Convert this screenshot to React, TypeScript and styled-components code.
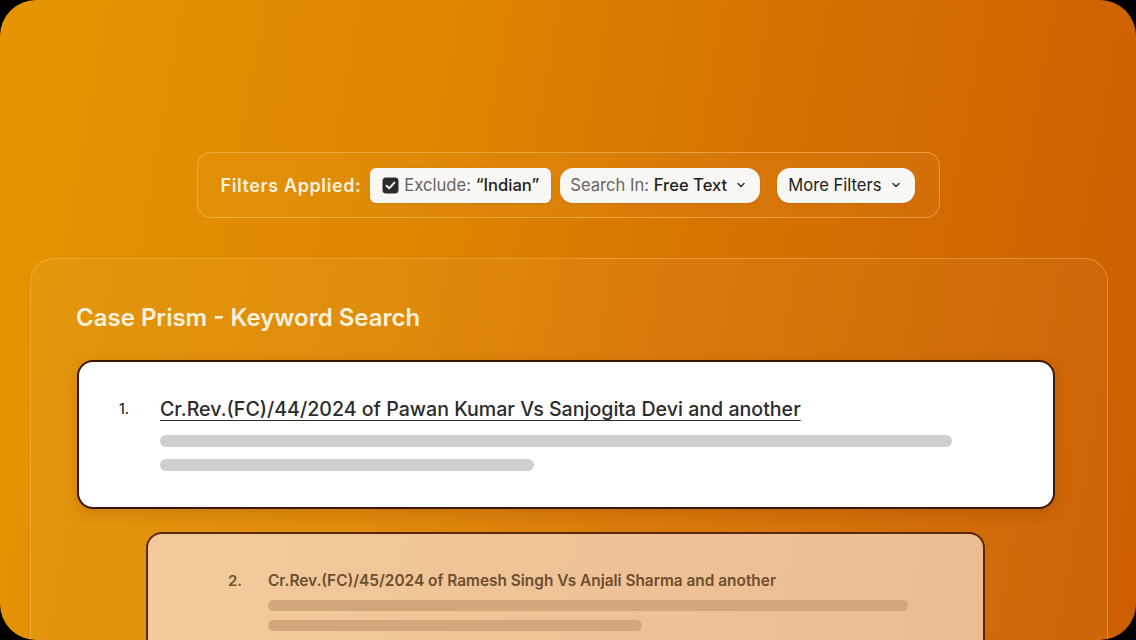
import React from "react";
import styled, { createGlobalStyle } from "styled-components";

const Global = createGlobalStyle`
  html, body { margin: 0; padding: 0; background: #000; }
  body { font-family: Inter, "Noto Sans", "Liberation Sans", sans-serif; }
  * { box-sizing: border-box; }
`;

const Frame = styled.div`
  width: 1136px;
  height: 640px;
  border-radius: 36px;
  overflow: hidden;
  background: linear-gradient(100deg, #e49500 0%, #de8700 35%, #d77400 60%, #cc5e00 100%);
  display: flex;
  flex-direction: column;
  align-items: center;
`;

const FilterBar = styled.div`
  flex: none;
  margin-top: 152px;
  width: 743px;
  height: 66px;
  border-radius: 14px;
  border: 1px solid rgba(255, 214, 140, 0.4);
  background: rgba(255, 255, 255, 0.03);
  display: flex;
  align-items: center;
  padding: 0 24px 0 23px;
`;

const FilterLabel = styled.span`
  font-size: 18px;
  font-weight: 600;
  letter-spacing: 0.6px;
  color: #fdf1dd;
  margin-right: 9px;
  white-space: nowrap;
`;

const Chip = styled.div<{ $radius: number; $gapAfter: number; $padL: number; $padR: number }>`
  height: 35px;
  display: flex;
  align-items: center;
  gap: 5px;
  padding: 0 ${(p) => p.$padR}px 0 ${(p) => p.$padL}px;
  margin-right: ${(p) => p.$gapAfter}px;
  border-radius: ${(p) => p.$radius}px;
  background: #f9f7f4;
  font-size: 16.6px;
  white-space: nowrap;
  box-shadow: 0 1px 2px rgba(120, 60, 0, 0.15);
`;

const Muted = styled.span`
  color: #666360;
  font-weight: 400;
`;

const Strong = styled.span<{ $weight?: number }>`
  color: #232220;
  font-weight: ${(p) => p.$weight ?? 500};
`;

const Chevron = styled.svg`
  margin-left: 4px;
  flex: none;
`;

const Panel = styled.div`
  margin-top: 40px;
  align-self: stretch;
  margin-left: 30px;
  margin-right: 28px;
  flex: 1 0 auto;
  border-radius: 24px 24px 0 0;
  border: 1px solid rgba(255, 210, 130, 0.35);
  border-bottom: none;
  background: linear-gradient(100deg, rgba(255, 255, 255, 0.05), rgba(255, 255, 255, 0.03));
  padding: 44px 52px 0 45px;
  display: flex;
  flex-direction: column;
`;

const Title = styled.h1`
  margin: 0;
  font-size: 24px;
  line-height: 30px;
  font-weight: 600;
  color: #fdf1dc;
`;

const Card = styled.div<{ $variant: "front" | "back" }>`
  flex: none;
  border: 2px solid ${(p) => (p.$variant === "front" ? "#3a1606" : "#5a2800")};
  border-radius: 16px;
  background: ${(p) =>
    p.$variant === "front" ? "#ffffff" : "linear-gradient(100deg, #f2cb9c, #ebbc92)"};
  box-shadow: ${(p) => (p.$variant === "front" ? "0 4px 14px rgba(90, 30, 0, 0.18)" : "none")};
  margin: ${(p) => (p.$variant === "front" ? "27px 0 0 1px" : "23px 70px 0")};
  padding: ${(p) => (p.$variant === "front" ? "34px 40px 36px 40px" : "36px 40px 40px 80px")};
  display: flex;
`;

const Num = styled.span<{ $variant: "front" | "back" }>`
  width: ${(p) => (p.$variant === "front" ? 41 : 40)}px;
  flex: none;
  font-size: ${(p) => (p.$variant === "front" ? 14 : 15)}px;
  font-weight: ${(p) => (p.$variant === "front" ? 500 : 600)};
  line-height: ${(p) => (p.$variant === "front" ? 26 : 22)}px;
  color: ${(p) => (p.$variant === "front" ? "#2a2a2a" : "#70502f")};
`;

const Body = styled.div`
  display: flex;
  flex-direction: column;
  flex: 1;
`;

const CaseTitle = styled.a<{ $variant: "front" | "back" }>`
  font-size: ${(p) => (p.$variant === "front" ? 19.6 : 15.4)}px;
  font-weight: ${(p) => (p.$variant === "front" ? 500 : 600)};
  line-height: ${(p) => (p.$variant === "front" ? 26 : 22)}px;
  color: ${(p) => (p.$variant === "front" ? "#2b2b2b" : "#6e4d2e")};
  text-decoration: ${(p) => (p.$variant === "front" ? "underline" : "none")};
  text-underline-offset: 4px;
  text-decoration-thickness: 1px;
  align-self: flex-start;
  white-space: nowrap;
  margin-bottom: ${(p) => (p.$variant === "front" ? 13 : 8)}px;
`;

const Bars = styled.div<{ $gap: number }>`
  display: flex;
  flex-direction: column;
  gap: ${(p) => p.$gap}px;
`;

const Bar = styled.div<{ $w: number; $h: number; $color: string }>`
  width: ${(p) => p.$w}px;
  height: ${(p) => p.$h}px;
  border-radius: 6px;
  background: ${(p) => p.$color};
`;

const ChevronIcon = () => (
  <Chevron width="10" height="10" viewBox="0 0 10 10">
    <path d="M2 3.5 L5 6.5 L8 3.5" fill="none" stroke="#333" strokeWidth="1.5" strokeLinecap="round" strokeLinejoin="round" />
  </Chevron>
);

const CheckIcon = () => (
  <svg width="17" height="17" viewBox="0 0 17 17" style={{ flex: "none" }}>
    <rect x="0.5" y="0.5" width="16" height="16" rx="3.5" fill="#2b2b2d" />
    <path d="M4.5 8.7 L7.2 11.3 L12.4 5.6" fill="none" stroke="#fff" strokeWidth="1.9" strokeLinecap="round" strokeLinejoin="round" />
  </svg>
);

export default function App() {
  return (
    <>
      <Global />
      <Frame>
        <FilterBar>
          <FilterLabel>Filters Applied:</FilterLabel>
          <Chip $radius={6} $gapAfter={9} $padL={12} $padR={12}>
            <CheckIcon />
            <span>
              <Muted>Exclude: </Muted>
              <Strong>“Indian”</Strong>
            </span>
          </Chip>
          <Chip $radius={13} $gapAfter={17} $padL={10} $padR={14}>
            <span>
              <Muted>Search In: </Muted>
              <Strong>Free Text</Strong>
            </span>
            <ChevronIcon />
          </Chip>
          <Chip $radius={13} $gapAfter={0} $padL={11} $padR={14}>
            <Strong $weight={400}>More Filters</Strong>
            <ChevronIcon />
          </Chip>
        </FilterBar>
        <Panel>
          <Title>Case Prism - Keyword Search</Title>
          <Card $variant="front">
            <Num $variant="front">1.</Num>
            <Body>
              <CaseTitle $variant="front">Cr.Rev.(FC)/44/2024 of Pawan Kumar Vs Sanjogita Devi and another</CaseTitle>
              <Bars $gap={12}>
                <Bar $w={792} $h={12} $color="#cfcfcf" />
                <Bar $w={374} $h={12} $color="#cfcfcf" />
              </Bars>
            </Body>
          </Card>
          <Card $variant="back">
            <Num $variant="back">2.</Num>
            <Body>
              <CaseTitle $variant="back">Cr.Rev.(FC)/45/2024 of Ramesh Singh Vs Anjali Sharma and another</CaseTitle>
              <Bars $gap={9}>
                <Bar $w={640} $h={11} $color="#d3a77c" />
                <Bar $w={374} $h={11} $color="#d3a77c" />
              </Bars>
            </Body>
          </Card>
        </Panel>
      </Frame>
    </>
  );
}
